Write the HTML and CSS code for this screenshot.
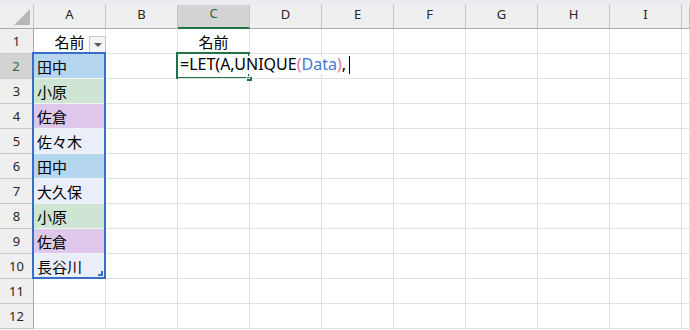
FILE: index.html
```html
<!DOCTYPE html>
<html lang="ja">
<head>
  <meta charset="UTF-8" />
  <title>Sheet</title>
  <link rel="stylesheet" href="styles.css">
</head>
<body>

<div class="strip"></div>

<div class="sheet">
  <!-- column headers -->
  <div class="corner"><span class="tri"></span></div>
  <div class="col-h">A</div>
  <div class="col-h">B</div>
  <div class="col-h sel">C</div>
  <div class="col-h">D</div>
  <div class="col-h">E</div>
  <div class="col-h">F</div>
  <div class="col-h">G</div>
  <div class="col-h">H</div>
  <div class="col-h">I</div>
  <div class="col-h"></div>

  <!-- row 1 -->
  <div class="row-h">1</div>
  <div class="cell head">名前<span class="filter"><span class="arrow"></span></span></div>
  <div class="cell"></div>
  <div class="cell head">名前</div>
  <div class="cell"></div><div class="cell"></div><div class="cell"></div><div class="cell"></div><div class="cell"></div><div class="cell"></div><div class="cell"></div>

  <!-- row 2 -->
  <div class="row-h sel">2</div>
  <div class="cell name blue">田中</div>
  <div class="cell"></div>
  <div class="cell edit"><span class="formula">=LET(A,UNIQUE<span class="paren">(</span><span class="ref">Data</span><span class="paren">)</span>,<span class="caret"></span></span></div>
  <div class="cell"></div><div class="cell"></div><div class="cell"></div><div class="cell"></div><div class="cell"></div><div class="cell"></div><div class="cell"></div>

  <!-- row 3 -->
  <div class="row-h">3</div>
  <div class="cell name green">小原</div>
  <div class="cell"></div><div class="cell"></div><div class="cell"></div><div class="cell"></div><div class="cell"></div><div class="cell"></div><div class="cell"></div><div class="cell"></div><div class="cell"></div>

  <!-- row 4 -->
  <div class="row-h">4</div>
  <div class="cell name purple">佐倉</div>
  <div class="cell"></div><div class="cell"></div><div class="cell"></div><div class="cell"></div><div class="cell"></div><div class="cell"></div><div class="cell"></div><div class="cell"></div><div class="cell"></div>

  <!-- row 5 -->
  <div class="row-h">5</div>
  <div class="cell name">佐々木</div>
  <div class="cell"></div><div class="cell"></div><div class="cell"></div><div class="cell"></div><div class="cell"></div><div class="cell"></div><div class="cell"></div><div class="cell"></div><div class="cell"></div>

  <!-- row 6 -->
  <div class="row-h">6</div>
  <div class="cell name blue">田中</div>
  <div class="cell"></div><div class="cell"></div><div class="cell"></div><div class="cell"></div><div class="cell"></div><div class="cell"></div><div class="cell"></div><div class="cell"></div><div class="cell"></div>

  <!-- row 7 -->
  <div class="row-h">7</div>
  <div class="cell name">大久保</div>
  <div class="cell"></div><div class="cell"></div><div class="cell"></div><div class="cell"></div><div class="cell"></div><div class="cell"></div><div class="cell"></div><div class="cell"></div><div class="cell"></div>

  <!-- row 8 -->
  <div class="row-h">8</div>
  <div class="cell name green">小原</div>
  <div class="cell"></div><div class="cell"></div><div class="cell"></div><div class="cell"></div><div class="cell"></div><div class="cell"></div><div class="cell"></div><div class="cell"></div><div class="cell"></div>

  <!-- row 9 -->
  <div class="row-h">9</div>
  <div class="cell name purple">佐倉</div>
  <div class="cell"></div><div class="cell"></div><div class="cell"></div><div class="cell"></div><div class="cell"></div><div class="cell"></div><div class="cell"></div><div class="cell"></div><div class="cell"></div>

  <!-- row 10 -->
  <div class="row-h">10</div>
  <div class="cell name">長谷川</div>
  <div class="cell"></div><div class="cell"></div><div class="cell"></div><div class="cell"></div><div class="cell"></div><div class="cell"></div><div class="cell"></div><div class="cell"></div><div class="cell"></div>

  <!-- row 11 -->
  <div class="row-h">11</div>
  <div class="cell"></div><div class="cell"></div><div class="cell"></div><div class="cell"></div><div class="cell"></div><div class="cell"></div><div class="cell"></div><div class="cell"></div><div class="cell"></div><div class="cell"></div>

  <!-- row 12 -->
  <div class="row-h">12</div>
  <div class="cell"></div><div class="cell"></div><div class="cell"></div><div class="cell"></div><div class="cell"></div><div class="cell"></div><div class="cell"></div><div class="cell"></div><div class="cell"></div><div class="cell"></div>

  <!-- selection overlays -->
  <div class="range"><span class="grip"></span></div>
  <div class="active"><span class="handle"></span></div>
</div>

</body>
</html>
```

FILE: styles.css
```css
html, body {
  margin: 0;
  padding: 0;
  background: #fff;
}

body {
  font-family: "Noto Sans", "Noto Sans CJK JP", sans-serif;
  color: #000;
  overflow: hidden;
}

.strip {
  height: 5px;
  background: #e9ecf0;
}

/* the grid: row header column + A..I + a sliver of J */
.sheet {
  position: relative;
  display: grid;
  grid-template-columns: 34px repeat(9, 72px) 1fr;
  grid-template-rows: 24px;
  grid-auto-rows: 25px;
}

.sheet > div {
  box-sizing: border-box;
}

.corner {
  position: relative;
  background: #efefef;
  border-right: 1px solid #c3c3c3;
  border-bottom: 1px solid #a8a8a8;
}
.tri {
  position: absolute;
  right: 3px;
  bottom: 3px;
  width: 0;
  height: 0;
  border-left: 16px solid transparent;
  border-bottom: 16px solid #b7b7b7;
}

.col-h {
  display: flex;
  align-items: center;
  justify-content: center;
  padding-bottom: 6px;
  background: #efefef;
  border-right: 1px solid #c3c3c3;
  border-bottom: 1px solid #a8a8a8;
  font-size: 13px;
  color: #262626;
}
.col-h.sel {
  background: #d3d3d3;
  color: #1b6b3f;
  border-bottom: 2px solid #217346;
}

.row-h {
  display: flex;
  align-items: center;
  justify-content: center;
  background: #efefef;
  border-right: 1px solid #a8a8a8;
  border-bottom: 1px solid #c8c8c8;
  font-size: 13px;
  color: #262626;
}
.row-h.sel {
  background: #d3d3d3;
  color: #1b6b3f;
  border-right: 2px solid #217346;
}

.cell {
  display: flex;
  align-items: center;
  padding-left: 3px;
  border-right: 1px solid #e1e1e1;
  border-bottom: 1px solid #e1e1e1;
  font-size: 15px;
  white-space: nowrap;
}

.cell.head {
  position: relative;
  justify-content: center;
  padding-left: 0;
  font-family: "Noto Sans CJK JP", sans-serif;
}

.filter {
  position: absolute;
  right: -1px;
  bottom: 0;
  width: 17px;
  height: 17px;
  box-sizing: border-box;
  border: 1px solid #c6c6c6;
  background: #f5f5f5;
  display: flex;
  align-items: center;
  justify-content: center;
}
.arrow {
  width: 0;
  height: 0;
  border-left: 4px solid transparent;
  border-right: 4px solid transparent;
  border-top: 4px solid #595959;
}

.cell.name {
  font-family: "Noto Sans CJK JP", sans-serif;
  background: #e9eef8;
  border-bottom-color: #f3f3f3;
}
.cell.blue { background: #b4d7ef; }
.cell.green { background: #cde5d2; }
.cell.purple { background: #dfc7eb; }

/* cell in edit mode, text runs over the next columns */
.cell.edit {
  position: relative;
  z-index: 5;
  align-items: flex-start;
  padding-left: 2px;
  padding-top: 2px;
}
.formula {
  font-size: 16px;
  line-height: 16px;
  background: #fff;
  padding-right: 1px;
}
.paren { color: #e0709f; }
.ref { color: #4677d4; }
.caret {
  display: inline-block;
  width: 1px;
  height: 18px;
  margin-left: 3px;
  vertical-align: -4px;
  background: #000;
}

.range {
  position: absolute;
  grid-column: 2 / 3;
  grid-row: 3 / 12;
  inset: -2px 0 0 -2px;
  border: 2px solid #3a6cc9;
  z-index: 3;
  pointer-events: none;
}
.grip {
  position: absolute;
  right: 1px;
  bottom: 1px;
  width: 3px;
  height: 3px;
  border-right: 2px solid #3a6cc9;
  border-bottom: 2px solid #3a6cc9;
}

.active {
  position: absolute;
  grid-column: 4 / 5;
  grid-row: 3 / 4;
  inset: -2px 0 0 -2px;
  border: 2px solid #217346;
  z-index: 4;
  pointer-events: none;
}
.handle {
  position: absolute;
  right: -4px;
  bottom: -4px;
  width: 5px;
  height: 4px;
  background: #217346;
  border-left: 1px solid #fff;
  border-top: 1px solid #fff;
}
```
